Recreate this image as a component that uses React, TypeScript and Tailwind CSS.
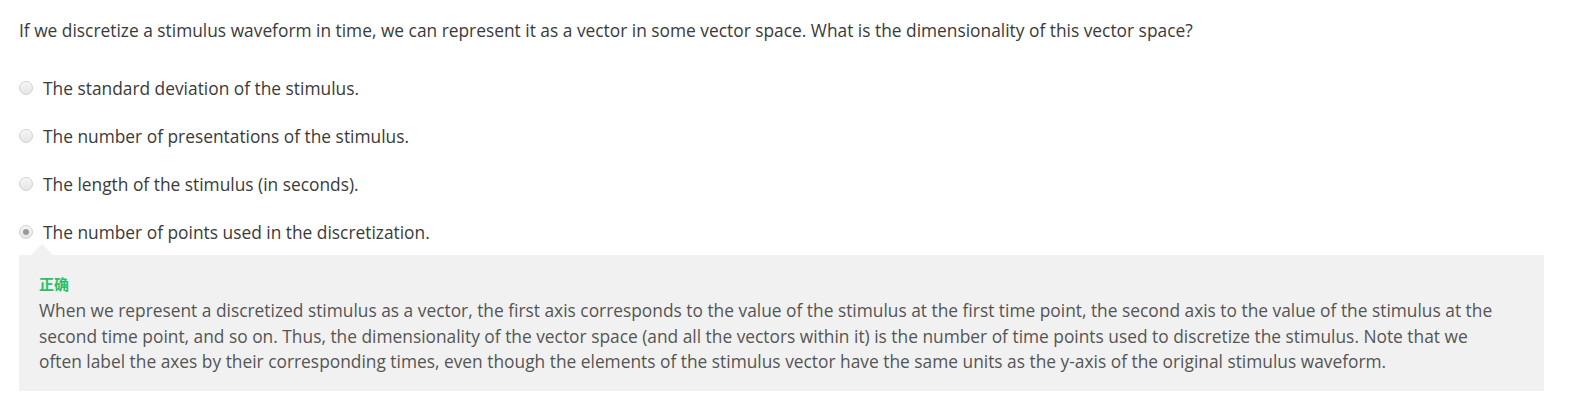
import React from "react";

const options = [
  "The standard deviation of the stimulus.",
  "The number of presentations of the stimulus.",
  "The length of the stimulus (in seconds).",
  "The number of points used in the discretization.",
];

function Radio({ checked }: { checked: boolean }) {
  return (
    <span className="relative flex h-[14px] w-[14px] shrink-0 items-center justify-center rounded-full border border-[#d0d0d0] bg-gradient-to-b from-[#f7f7f7] to-[#e4e4e4]">
      {checked && <span className="h-[6px] w-[6px] rounded-full bg-[#9a9a9a]" />}
    </span>
  );
}

export default function App() {
  return (
    <div
      className="min-h-[419px] bg-white pl-[19px] pr-[33px] pt-[18px] text-[#3a3a3a]"
      style={{ fontFamily: '"Open Sans", "Noto Sans CJK SC", sans-serif' }}
    >
      <p className="text-[17.35px] leading-6">
        If we discretize a stimulus waveform in time, we can represent it as a vector in some vector space. What is the dimensionality of this vector space?
      </p>
      <div className="mt-[34px] flex flex-col gap-6">
        {options.map((o, i) => (
          <label key={i} className="flex h-6 items-center gap-[10px] text-[17.35px] leading-6">
            <Radio checked={i === 3} />
            <span>{o}</span>
          </label>
        ))}
      </div>
      <div className="relative mt-[11px] bg-[#f1f1f1] pb-[16px] pl-[20px] pr-[40px] pt-[19px]">
        <span className="absolute left-[12px] top-[-11px] h-0 w-0 border-b-[11px] border-l-[11px] border-r-[11px] border-b-[#f1f1f1] border-l-transparent border-r-transparent" />
        <div
          className="text-[15px] font-bold leading-5 text-[#2bbf6a]"
          style={{ fontFamily: '"Noto Sans CJK SC", "Open Sans", sans-serif' }}
        >
          正确
        </div>
        <p className="mt-[4px] text-[17.35px] leading-[25.6px] text-[#555555]">
          When we represent a discretized stimulus as a vector, the first axis corresponds to the value of the stimulus at the first time point, the second axis to the value of the stimulus at the second time point, and so on. Thus, the dimensionality of the vector space (and all the vectors within it) is the number of time points used to discretize the stimulus. Note that we often label the axes by their corresponding times, even though the elements of the stimulus vector have the same units as the y-axis of the original stimulus waveform.
        </p>
      </div>
    </div>
  );
}
